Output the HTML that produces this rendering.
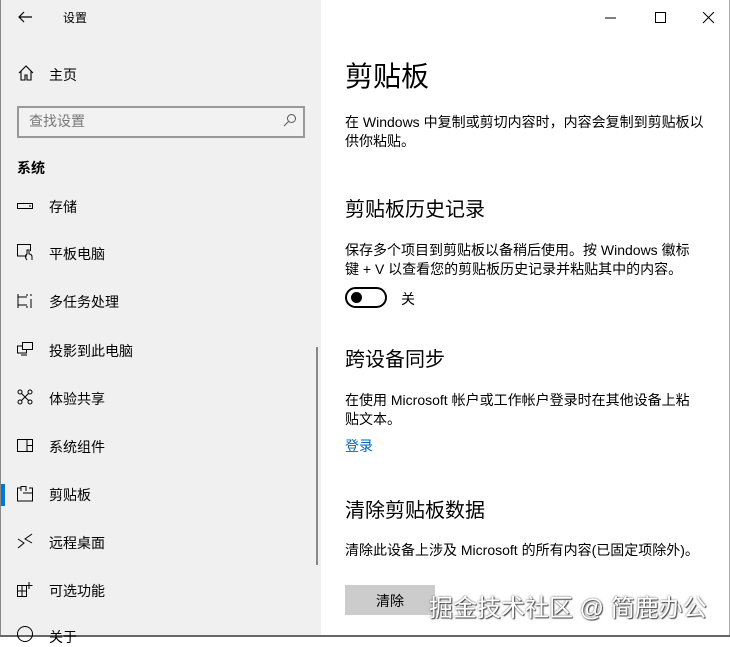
<!DOCTYPE html><html><head><meta charset="utf-8"><style>
body{margin:0;width:730px;height:637px;overflow:hidden;font-family:"Liberation Sans","Noto Sans CJK SC",sans-serif;color:#000;position:relative;background:#fff}
.side{position:absolute;left:0;top:0;width:321px;height:637px;background:#f0f0f0}
.t{position:absolute;white-space:nowrap}
.nav{font-size:14px}
svg{position:absolute}
.p{font-size:14px;line-height:19px;color:#000}
.h{font-size:20px}
</style></head><body>
<div class="side"></div>
<div style="position:absolute;left:0;top:0;width:1px;height:637px;background:#888"></div>
<div style="position:absolute;right:0;top:0;width:1px;height:637px;background:#aaa"></div>
<div style="position:absolute;left:0;bottom:0;width:730px;height:2px;background:#666"></div>
<svg style="left:17px;top:10px" width="16" height="14"><path d="M15 7H2M7 2L2 7l5 5" stroke="#000" fill="none" stroke-width="1.2"/></svg>
<div class="t" style="left:63px;top:9px;font-size:12px">设置</div>
<svg style="left:18px;top:65px" width="16" height="16"><path d="M1 8L8 1l7 7M3 6v9h4v-5h2v5h4V6" stroke="#000" fill="none" stroke-width="1.1"/></svg>
<div class="t nav" style="left:49px;top:65px">主页</div>
<div style="position:absolute;left:17px;top:106px;width:284px;height:28px;border:2px solid #999;background:#f2f2f2"></div>
<div class="t" style="left:29px;top:111px;font-size:14px;color:#777">查找设置</div>
<svg style="left:283px;top:113px" width="14" height="14"><circle cx="8.5" cy="5.5" r="4" stroke="#555" fill="none"/><path d="M5.5 8.5L1 13" stroke="#555"/></svg>
<div class="t" style="left:17px;top:158px;font-size:14px;font-weight:bold">系统</div>
<svg style="left:17px;top:203px" width="16" height="7"><rect x=".5" y=".5" width="15" height="5" stroke="#000" fill="none"/><path d="M12 3h2" stroke="#000"/></svg>
<div class="t nav" style="left:49px;top:197px">存储</div>
<svg style="left:17px;top:244px" width="17" height="17"><path d="M10 12H.5V.5h13V7" stroke="#000" fill="none"/><path d="M10 16c-2-2-2-5 0-6V6h2v4c2 0 3 1 3 3v3" stroke="#000" fill="none"/></svg>
<div class="t nav" style="left:49px;top:244px">平板电脑</div>
<svg style="left:17px;top:293px" width="16" height="16"><path d="M1 1v14M1 4h9M1 12h9M10 1v2M10 13v2M14 1v2M14 6v9" stroke="#000" fill="none"/></svg>
<div class="t nav" style="left:49px;top:292px">多任务处理</div>
<svg style="left:17px;top:342px" width="17" height="14"><rect x="5.5" y=".5" width="10" height="7" stroke="#000" fill="none"/><path d="M5 4H.5v7h9V8M4 13h6" stroke="#000" fill="none"/></svg>
<div class="t nav" style="left:49px;top:341px">投影到此电脑</div>
<svg style="left:17px;top:389px" width="16" height="16"><circle cx="3" cy="3" r="2" stroke="#000" fill="none"/><circle cx="13" cy="3" r="2" stroke="#000" fill="none"/><circle cx="3" cy="13" r="2" stroke="#000" fill="none"/><circle cx="13" cy="13" r="2" stroke="#000" fill="none"/><path d="M4.5 4.5l7 7M11.5 4.5l-7 7" stroke="#000"/></svg>
<div class="t nav" style="left:49px;top:389px">体验共享</div>
<svg style="left:17px;top:439px" width="16" height="13"><rect x=".5" y=".5" width="15" height="12" stroke="#000" fill="none"/><path d="M10 1v12M10 6.5h6" stroke="#000"/></svg>
<div class="t nav" style="left:49px;top:437px">系统组件</div>
<div style="position:absolute;left:1px;top:484px;width:4px;height:22px;background:#0078d7"></div>
<svg style="left:17px;top:485px" width="16" height="17"><path d="M4 3H.5v13h15V3H12M4 6V1.5h5V6M6 8h9" stroke="#000" fill="none"/></svg>
<div class="t nav" style="left:49px;top:485px">剪贴板</div>
<svg style="left:17px;top:533px" width="16" height="16"><path d="M1 6l6 4-6 5M15 1l-7 5 7 4" stroke="#000" fill="none"/></svg>
<div class="t nav" style="left:49px;top:533px">远程桌面</div>
<svg style="left:17px;top:581px" width="16" height="16"><path d="M.5 4.5h9v11h-9zM.5 10h9M5 4.5v11M12 1v7M8.5 4.5h7" stroke="#000" fill="none"/></svg>
<div class="t nav" style="left:49px;top:581px">可选功能</div>
<svg style="left:17px;top:626px" width="16" height="16"><circle cx="8" cy="8" r="7.5" stroke="#000" fill="none"/></svg>
<div class="t nav" style="left:49px;top:627px">关于</div>
<div style="position:absolute;left:316px;top:347px;width:2px;height:218px;background:#888"></div>
<svg style="left:605px;top:12px" width="110" height="12"><path d="M0 6h11" stroke="#000"/><rect x="50.5" y=".5" width="10" height="10" stroke="#000" fill="none"/><path d="M98 0l11 11M109 0L98 11" stroke="#000"/></svg>
<div class="t" style="left:345px;top:55px;font-size:28px">剪贴板</div>
<div class="t p" style="left:345px;top:113px">在 Windows 中复制或剪切内容时，内容会复制到剪贴板以<br>供你粘贴。</div>
<div class="t h" style="left:345px;top:193px">剪贴板历史记录</div>
<div class="t p" style="left:345px;top:241px">保存多个项目到剪贴板以备稍后使用。按 Windows 徽标<br>键 + V 以查看您的剪贴板历史记录并粘贴其中的内容。</div>
<div style="position:absolute;left:345px;top:287px;border:2px solid #000;border-radius:11px;box-sizing:border-box;width:42px;height:21px"></div>
<div style="position:absolute;left:351px;top:292px;width:11px;height:11px;border-radius:50%;background:#000"></div>
<div class="t" style="left:401px;top:289px;font-size:14px">关</div>
<div class="t h" style="left:345px;top:343px">跨设备同步</div>
<div class="t p" style="left:345px;top:391px">在使用 Microsoft 帐户或工作帐户登录时在其他设备上粘<br>贴文本。</div>
<div class="t" style="left:345px;top:436px;font-size:14px;color:#0067b8">登录</div>
<div class="t h" style="left:345px;top:494px">清除剪贴板数据</div>
<div class="t p" style="left:345px;top:541px">清除此设备上涉及 Microsoft 的所有内容(已固定项除外)。</div>
<div style="position:absolute;left:345px;top:585px;width:90px;height:30px;background:#ccc"></div>
<div class="t" style="left:376px;top:591px;font-size:14px">清除</div>
<div class="t" style="left:429px;top:588px;font-size:24px;color:#fff;text-shadow:0 0 2px #555,1px 1px 1px #444">掘金技术社区 @ 简鹿办公</div>
</body></html>
